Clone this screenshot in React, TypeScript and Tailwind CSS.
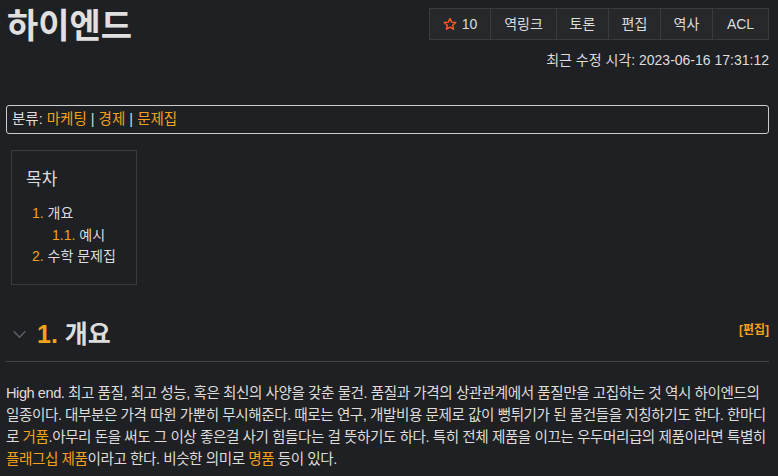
import React from "react";

const O = "text-[#f4a21c]";

function Btn({ children, first }: { children: React.ReactNode; first?: boolean }) {
  return (
    <div className={`flex h-full items-center justify-center bg-[#27282c] text-[14px] text-[#dddddd] ${first ? "" : "border-l border-[#3a3b3f]"}`}>
      {children}
    </div>
  );
}

export default function App() {
  return (
    <div
      className="min-h-[476px] w-[778px] bg-[#1f2023] pl-[6px] pr-[9px] text-[#dddddd]"
      style={{ fontFamily: '"Liberation Sans", "Noto Sans CJK KR", sans-serif' }}
    >
      <div className="flex items-start justify-between pt-[8px]">
        <h1 className="ml-[1px] text-[34px] font-bold leading-[36px] text-[#e0e0e0]">하이엔드</h1>
        <div className="flex flex-col items-end">
          <div className="grid h-[32px] grid-cols-[60px_66px_52px_52px_52px_56px] border border-[#3a3b3f]">
            <Btn first>
              <svg width="14" height="14" viewBox="0 0 24 24" fill="none" stroke="#ff5a1f" strokeWidth="2.4" strokeLinejoin="round" className="mr-[5px]">
                <path d="M12 2.5l2.9 6.3 6.9.7-5.2 4.6 1.5 6.8L12 17.4l-6.1 3.5 1.5-6.8-5.2-4.6 6.9-.7z" />
              </svg>
              10
            </Btn>
            <Btn>역링크</Btn>
            <Btn>토론</Btn>
            <Btn>편집</Btn>
            <Btn>역사</Btn>
            <Btn>ACL</Btn>
          </div>
          <div className="mt-[10px] text-[14px] leading-[20px] text-[#dddddd]">최근 수정 시각: 2023-06-16 17:31:12</div>
        </div>
      </div>

      <div className="mt-[35px] flex h-[29px] items-center rounded-[3px] border border-[#cccccc] px-[5px] text-[14.5px]">
        <span>분류:&nbsp;</span>
        <span className={O}>마케팅</span>
        <span>&nbsp;|&nbsp;</span>
        <span className={O}>경제</span>
        <span>&nbsp;|&nbsp;</span>
        <span className={O}>문제집</span>
      </div>

      <div className="ml-[5px] mt-[16px] w-[126px] border border-[#3a3b3f] px-[14px] pb-[16px] pt-[18px]">
        <div className="text-[17px] leading-[22px]">목차</div>
        <div className="mt-[12px] pl-[6px] text-[14px] leading-[21.5px]">
          <div><span className={O}>1.</span> 개요</div>
          <div className="pl-[20px]"><span className={O}>1.1.</span> 예시</div>
          <div><span className={O}>2.</span> 수학 문제집</div>
        </div>
      </div>

      <div className="mt-[31px] flex items-center border-b border-[#444548] pb-[9px]">
        <svg width="15" height="9" viewBox="0 0 16 10" fill="none" stroke="#5f6166" strokeWidth="1.6" className="ml-[6px] mr-[10px] mt-[2px]">
          <path d="M1.5 1.5l6.5 6.5 6.5-6.5" />
        </svg>
        <h2 className="text-[25px] font-bold leading-[36px]">
          <span className={O}>1.</span> 개요
        </h2>
        <span className={`ml-auto mb-[8px] text-[12px] font-bold ${O}`}>[편집]</span>
      </div>

      <p className="mt-[20px] text-[14.6px] leading-[22px] tracking-[-0.45px]">
        High end. 최고 품질, 최고 성능, 혹은 최신의 사양을 갖춘 물건. 품질과 가격의 상관관계에서 품질만을 고집하는 것 역시 하이엔드의 일종이다. 대부분은 가격 따윈 가뿐히 무시해준다. 때로는 연구, 개발비용 문제로 값이 뻥튀기가 된 물건들을 지칭하기도 한다. 한마디로 <span className={O}>거품</span>.아무리 돈을 써도 그 이상 좋은걸 사기 힘들다는 걸 뜻하기도 하다. 특히 전체 제품을 이끄는 우두머리급의 제품이라면 특별히 <span className={O}>플래그십 제품</span>이라고 한다. 비슷한 의미로 <span className={O}>명품</span> 등이 있다.
      </p>
    </div>
  );
}
